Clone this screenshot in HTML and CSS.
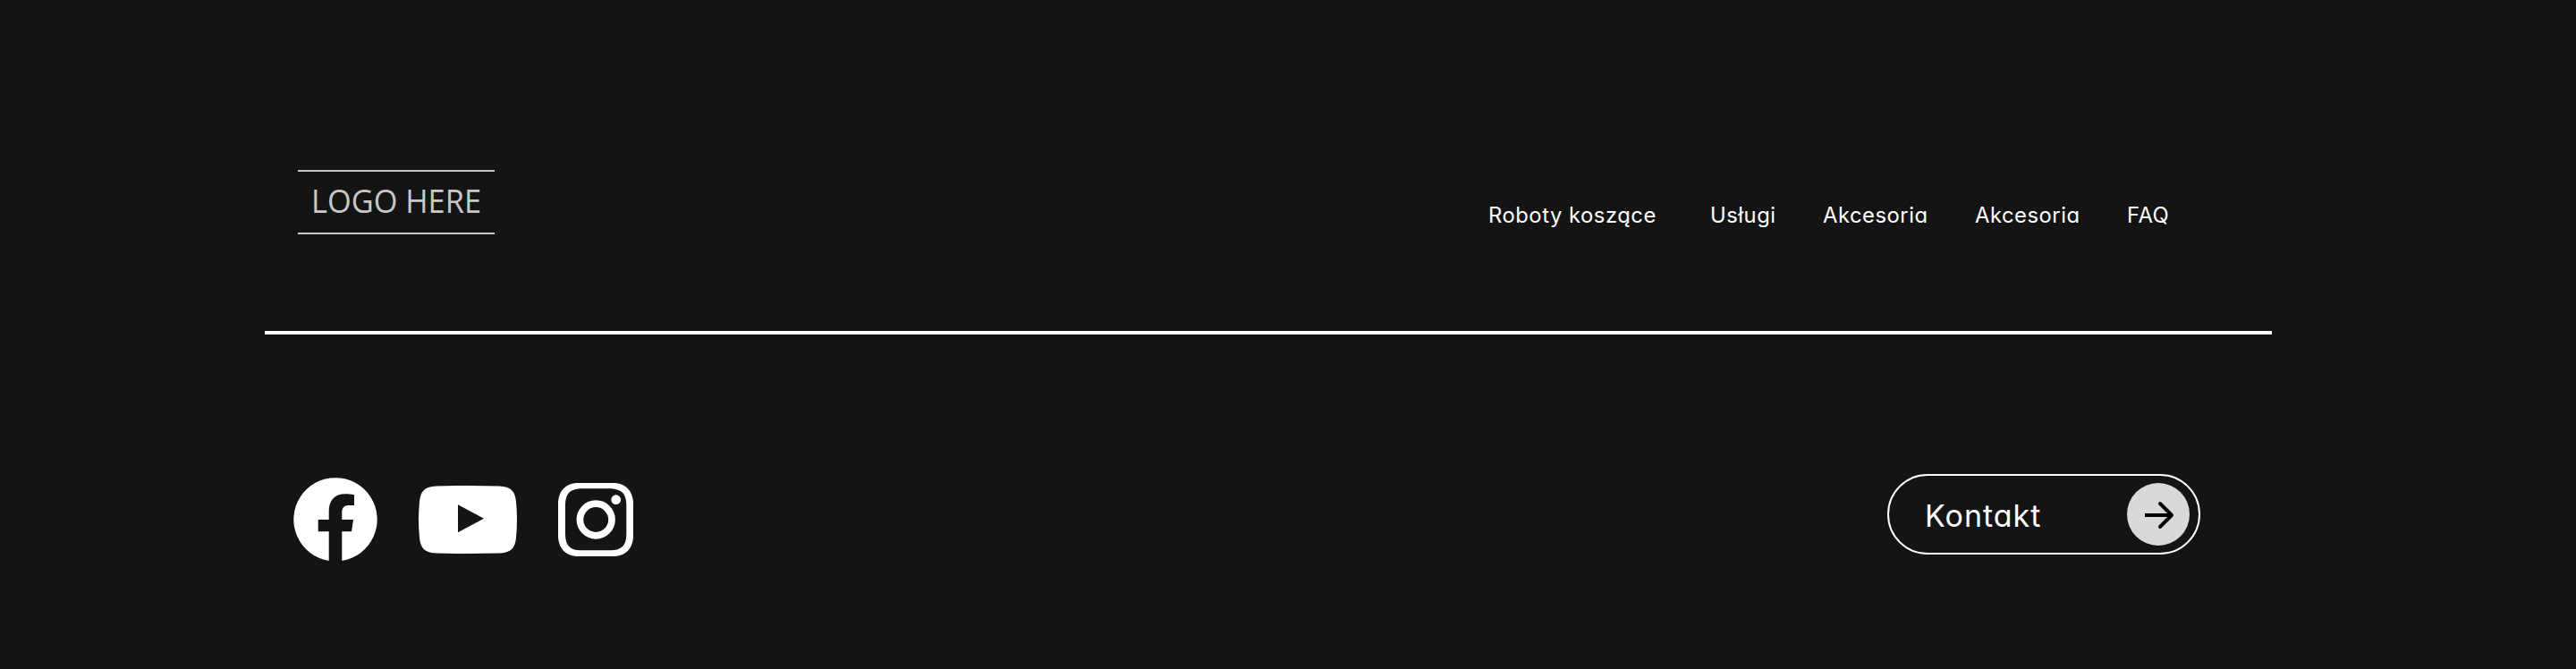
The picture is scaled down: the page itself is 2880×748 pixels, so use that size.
FILE: index.html
```html
<!DOCTYPE html>
<html lang="pl">
<head>
<meta charset="utf-8">
<title>Stopka</title>
<link rel="stylesheet" href="styles.css">
</head>
<body>
<footer class="footer">
  <div class="footer-top">
    <svg class="logo" width="220" height="74" viewBox="0 0 220 74" role="img" aria-label="Logo here">
      <path d="M0 2h220M0 72h220" stroke="#c8c8c8" stroke-width="2"/>
      <text class="logo-text" x="15" y="49.2" textLength="190" lengthAdjust="spacingAndGlyphs">LOGO HERE</text>
    </svg>
    <nav class="nav">
      <a class="nav-link">Roboty koszące</a>
      <a class="nav-link">Usługi</a>
      <a class="nav-link">Akcesoria</a>
      <a class="nav-link">Akcesoria</a>
      <a class="nav-link">FAQ</a>
    </nav>
  </div>
  <div class="footer-bottom">
    <div class="social">
      <svg width="94" height="94" viewBox="0 0 94 94" fill="#fff">
        <path d="M39.7 93A46.7 46.7 0 1 1 54.3 93V60.3H65L67 47H54.3V39C54.3 33.5 57 31 62 31H68V19.3C64 18.6 61 18.3 58 18.3C46 18.3 39.7 25.5 39.7 38V47H27.7V60.3H39.7Z"/>
      </svg>
      <svg width="110" height="76" viewBox="0 0 110 76" fill="#fff">
        <path fill-rule="evenodd" d="M20 .4Q55-.4 90 .4C103 .8 108 6 109 18Q111 38 109 58C108 70 103 75.2 90 75.6Q55 76.4 20 75.6C7 75.2 2 70 1 58Q-1 38 1 18C2 6 7 .8 20 .4ZM44 21.3V52.3L73 36.7Z"/>
      </svg>
      <svg width="84" height="82" viewBox="0 0 84 82" fill="#fff">
        <path fill-rule="evenodd" d="M20 0H64C76 1 83 9 84 21V61C83 73 76 81 64 82H20C8 81 1 73 0 61V21C1 9 8 1 20 0ZM25 6.3C13 7 8.5 12 8 24V58C8.5 70 13 75 25 75.3H59C71 75 76 70 76.3 58V24C76 12 71 7 59 6.3Z"/>
        <circle cx="42.2" cy="41" r="17.8" fill="none" stroke="#fff" stroke-width="7.7"/>
        <circle cx="64.7" cy="18.7" r="5.4"/>
      </svg>
    </div>
    <a class="contact">
      <span class="contact-label">Kontakt</span>
      <svg class="contact-icon" width="70" height="70" viewBox="0 0 70 70" fill="none" stroke="#000" stroke-width="4">
        <circle cx="35" cy="35" r="35" fill="#d9d9d9" stroke="none"/>
        <path d="M20 36H51"/>
        <path d="M37 23L50 36L37 49" stroke-linecap="round" stroke-linejoin="round"/>
      </svg>
    </a>
  </div>
</footer>
</body>
</html>
```
FILE: styles.css
```css
* { box-sizing: border-box; }
body { margin: 0; background: #141414; }
.footer {
  height: 748px;
  padding: 0 340px 0 296px;
  background: #141414;
  color: #fff;
  font-family: Inter, "Open Sans", sans-serif;
  font-feature-settings: "cv11";
}
.footer-top {
  display: flex;
  justify-content: space-between;
  align-items: flex-start;
  height: 374px;
  padding: 189px 0 0 37px;
  border-bottom: 4px solid #fff;
}
.logo-text {
  font: 36.9px "Open Sans", sans-serif;
  fill: #c8c8c8;
}
.nav {
  display: grid;
  grid-template-columns: 248px 126px 170px 170px 162px;
  padding-top: 34px;
}
.nav-link {
  font-size: 23.8px;
  line-height: 36px;
  letter-spacing: 0.52px;
  white-space: nowrap;
}
.footer-bottom {
  display: flex;
  justify-content: space-between;
  align-items: flex-start;
  padding: 156px 80px 0 32px;
}
.social {
  display: flex;
  align-items: center;
  gap: 46px;
  padding-top: 4px;
}
.contact {
  display: flex;
  align-items: center;
  justify-content: space-between;
  width: 350px;
  height: 90px;
  padding: 0 10px 0 40px;
  border: 2px solid #fff;
  border-radius: 45px;
}
.contact-label {
  padding-top: 3px;
  font-size: 34px;
  line-height: 50px;
  letter-spacing: 1px;
}
```
